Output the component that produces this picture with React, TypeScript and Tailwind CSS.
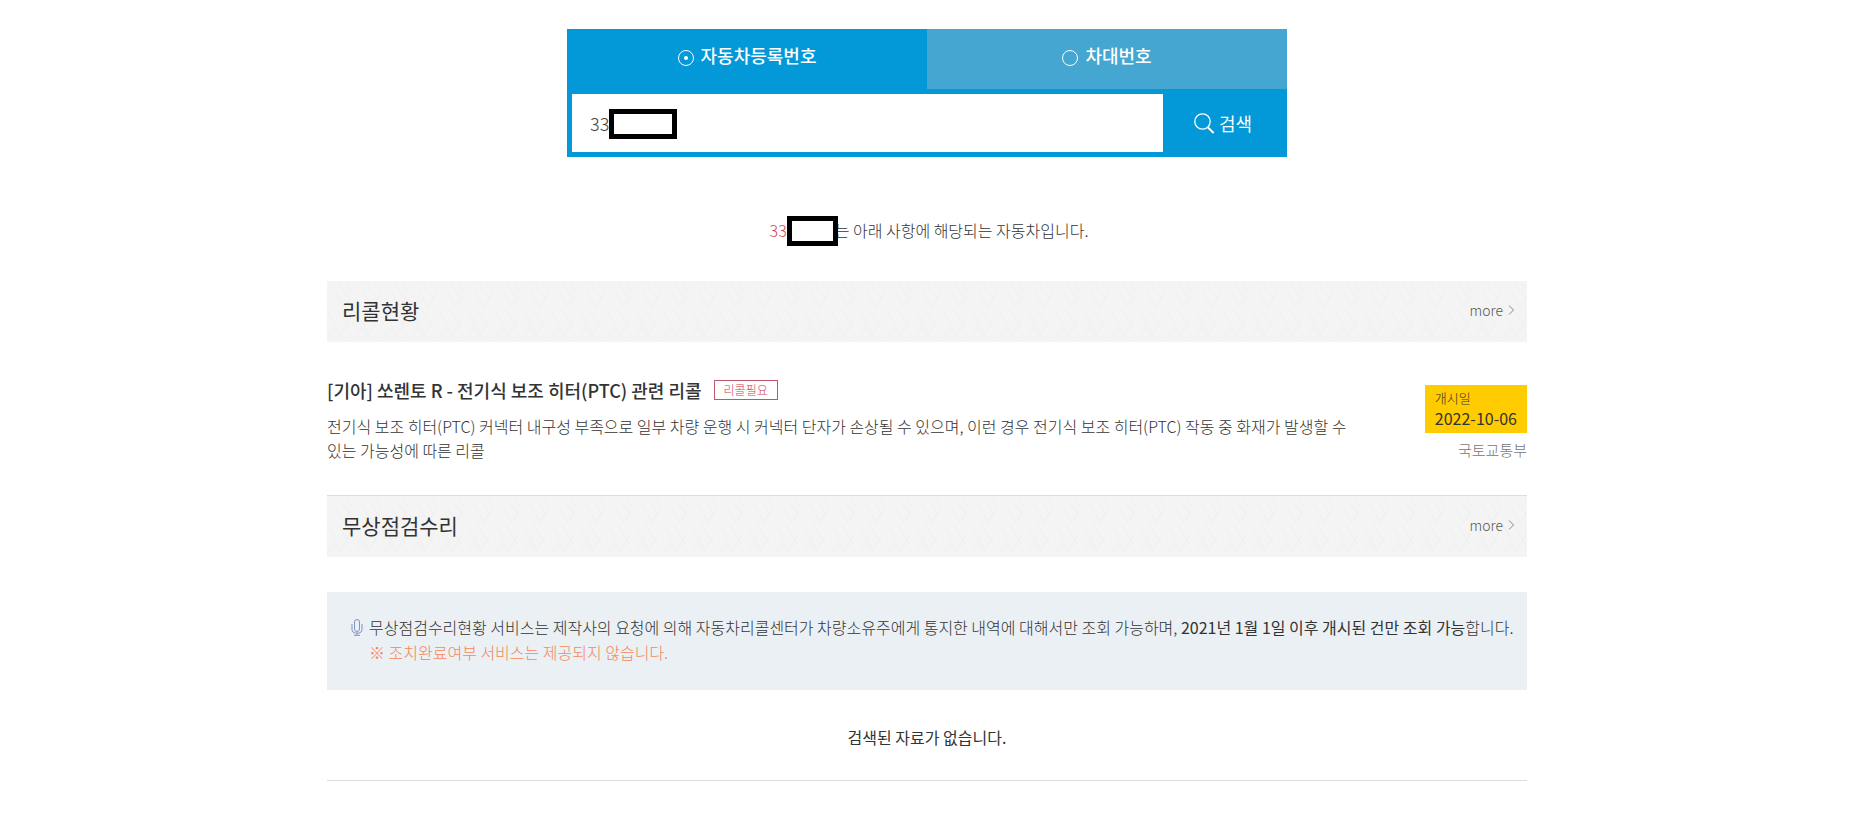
import { useState } from 'react';

const SEARCH_TYPES = [
    { id: 'carNo', label: '자동차등록번호' },
    { id: 'vin', label: '차대번호' },
];

function SearchIcon() {
    return (
        <svg width="21" height="21" viewBox="0 0 21 21" fill="none" stroke="currentColor" aria-hidden="true">
            <circle cx="8.5" cy="8.5" r="7.7" strokeWidth="1.3" />
            <path d="M13.8 14.2L19.6 20" strokeWidth="2" />
        </svg>
    );
}

function MicIcon() {
    return (
        <svg width="12" height="17" viewBox="0 0 12 17" fill="none" stroke="#7f93c4" aria-hidden="true" className="mt-1 shrink-0">
            <rect x="3.5" y="0.5" width="5" height="12" rx="2.5" />
            <path d="M1 5v5.500c0 2 1.400 3.500 3.500 3.500h3c2.100 0 3.500-1.500 3.500-3.500V5M6 14v2M3 16.300h6" />
        </svg>
    );
}

function HeaderPattern({ id }: { id: string }) {
    return (
        <svg className="absolute inset-0 h-full w-full" aria-hidden="true">
            <defs>
                <pattern id={id} width="28" height="61" patternUnits="userSpaceOnUse">
                    <path
                        d="M7 8L17 26L24 15M12 1L23 19M0 29L13 52M10 27L22 48M2 56L7 46L13 56L24 36M20 2L26 12M22 53L26 58"
                        fill="none"
                        stroke="#efefef"
                    />
                </pattern>
            </defs>
            <rect width="100%" height="100%" fill={`url(#${id})`} />
        </svg>
    );
}

function SectionHeader({ id, title }: { id: string; title: string }) {
    return (
        <div className="relative flex h-[61px] items-center justify-between bg-[#f4f4f4] pr-3 pb-1 pl-[15px]">
            <HeaderPattern id={id} />
            <h2 className="relative text-[21px] leading-8 text-[#333]">{title}</h2>
            <a href="#more" className="relative flex items-center gap-[5px] text-sm font-light text-[#555]">
                more
                <svg width="7" height="10" viewBox="0 0 7 10" fill="none" stroke="#888" aria-hidden="true">
                    <path d="M1 0.500L5.500 5L1 9.500" />
                </svg>
            </a>
        </div>
    );
}

export default function App() {
    const [searchType, setSearchType] = useState('carNo');
    const [keyword, setKeyword] = useState('33');

    return (
        <main className="bg-white pt-[29px] pr-[5px] pb-10 font-['Noto_Sans_CJK_KR',sans-serif] text-[#333]">
            <div className="mx-auto max-w-[1200px]">
                <form className="mx-auto max-w-[720px] bg-[#0398d8]" onSubmit={(e) => e.preventDefault()}>
                    <div className="grid grid-cols-2">
                        {SEARCH_TYPES.map((type) => (
                            <label
                                key={type.id}
                                className={`flex h-[60px] items-center justify-center gap-[7px] pb-2 text-lg font-medium text-white ${
                                    searchType === type.id ? '' : 'bg-[#44a6d1]'
                                }`}
                            >
                                <input
                                    type="radio"
                                    name="searchType"
                                    value={type.id}
                                    checked={searchType === type.id}
                                    onChange={() => setSearchType(type.id)}
                                    className="mt-[6px] grid size-4 appearance-none place-items-center rounded-full border border-white before:size-1 before:rounded-full checked:before:bg-white"
                                />
                                {type.label}
                            </label>
                        ))}
                    </div>
                    <div className="flex py-[5px] pl-[5px]">
                        <div className="relative flex-1">
                            <input
                                type="text"
                                aria-label="자동차등록번호"
                                value={keyword}
                                onChange={(e) => setKeyword(e.target.value)}
                                className="h-[58px] w-full bg-white px-[18px] text-lg font-light text-[#444] outline-none"
                            />
                            <span className="absolute top-[15px] left-[37px] h-[30px] w-[68px] border-5 border-black bg-white" />
                        </div>
                        <button type="submit" className="flex w-[124px] items-center justify-center gap-1 pr-1 text-lg text-white">
                            <SearchIcon />
                            검색
                        </button>
                    </div>
                </form>

                <p className="mt-[59px] flex h-[30px] items-center justify-center pl-1 text-base leading-7 font-light">
                    <span className="pb-[2px] text-[#d0404f]">33</span>
                    <span className="relative -mr-[3px] h-[30px] w-[51px] border-5 border-black bg-white" />
                    <span className="pb-[2px]">는 아래 사항에 해당되는 자동차입니다.</span>
                </p>

                <section className="mt-[35px]">
                    <SectionHeader id="recall-pattern" title="리콜현황" />
                    <div className="flex justify-between border-b border-[#ddd] pt-8 pb-[33px]">
                        <div className="max-w-[1030px]">
                            <div className="flex items-center gap-3">
                                <h3 className="text-lg leading-8 font-medium">[기아] 쏘렌토 R - 전기식 보조 히터(PTC) 관련 리콜</h3>
                                <span className="border border-[#c0566c] px-[9px] text-xs leading-[18px] font-light text-[#d0404f]">
                                    리콜필요
                                </span>
                            </div>
                            <p className="mt-2 text-base leading-6 font-light break-keep">
                                전기식 보조 히터(PTC) 커넥터 내구성 부족으로 일부 차량 운행 시 커넥터 단자가 손상될 수 있으며, 이런 경우 전기식
                                보조 히터(PTC) 작동 중 화재가 발생할 수 있는 가능성에 따른 리콜
                            </p>
                        </div>
                        <div className="mt-[11px] flex flex-col items-end">
                            <dl className="h-12 bg-[#fc0] px-[10px] pt-[3px]">
                                <dt className="text-[13px] leading-5 font-light">개시일</dt>
                                <dd className="text-base leading-5">2022-10-06</dd>
                            </dl>
                            <span className="mt-[5px] text-[15px] leading-6 font-light text-[#777]">국토교통부</span>
                        </div>
                    </div>
                </section>

                <section>
                    <SectionHeader id="repair-pattern" title="무상점검수리" />
                    <div className="mt-[35px] flex gap-[6px] bg-[#ebf0f4] pt-[23px] pr-2 pb-[25px] pl-6 text-base leading-[25px] font-light">
                        <MicIcon />
                        <div>
                            <p>
                                무상점검수리현황 서비스는 제작사의 요청에 의해 자동차리콜센터가 차량소유주에게 통지한 내역에 대해서만 조회
                                가능하며, <strong className="font-normal">2021년 1월 1일 이후 개시된 건만 조회 가능</strong>합니다.
                            </p>
                            <p className="text-[#f5875a]">※ 조치완료여부 서비스는 제공되지 않습니다.</p>
                        </div>
                    </div>
                    <p className="border-b border-[#ddd] pt-[35px] pb-[31px] text-center text-base">검색된 자료가 없습니다.</p>
                </section>
            </div>
        </main>
    );
}
